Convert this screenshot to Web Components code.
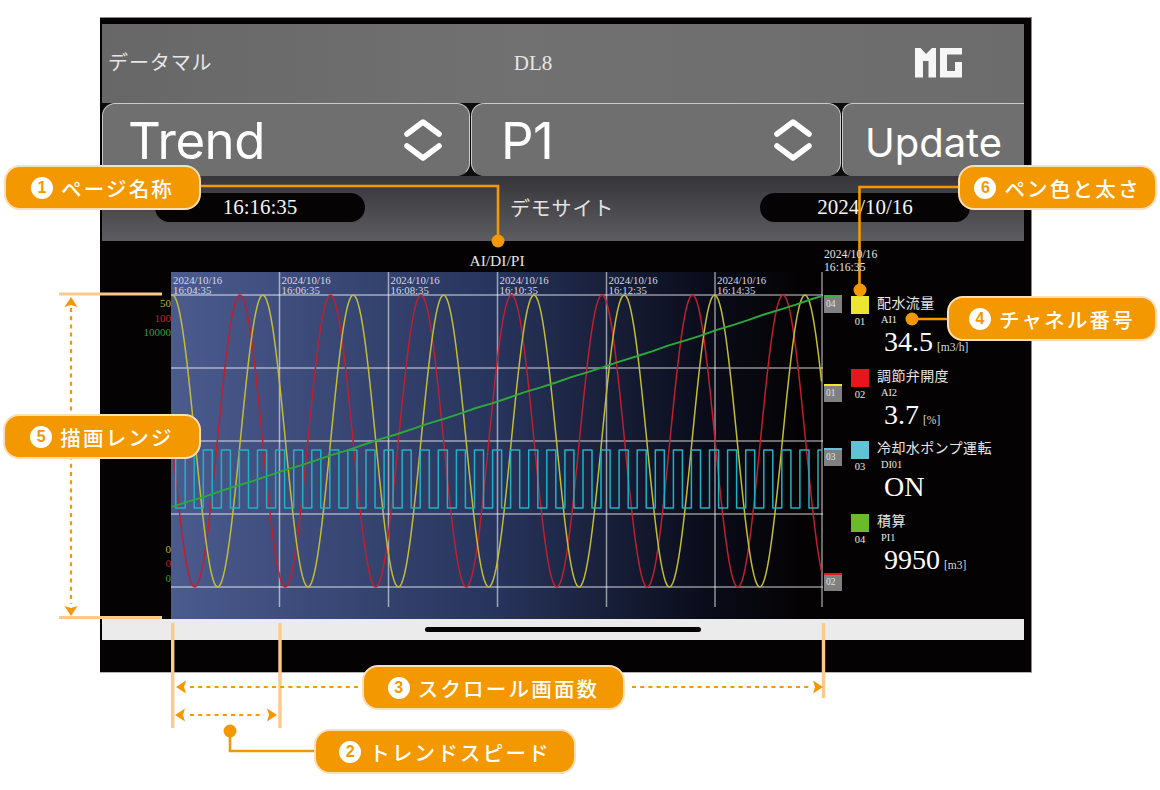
<!DOCTYPE html>
<html lang="ja">
<head>
<meta charset="utf-8">
<title>DL8 Trend</title>
<style>
  body{ margin:0; background:#fff; }
</style>
</head>
<body>
<dl-stage>
  <dl-device>
    <dl-header site="データマル" model="DL8"></dl-header>
    <dl-buttons>
      <dl-select w="368" pad="25" pr="25">Trend</dl-select>
      <dl-select w="370" pad="29" pr="26">P1</dl-select>
      <dl-update>Update</dl-update>
    </dl-buttons>
    <dl-infobar time="16:16:35" date="2024/10/16" name="デモサイト"></dl-infobar>
    <dl-trend>
      <dl-legend-item color="#ece532" no="01" tag="AI1" value="34.5" unit="[m3/h]">配水流量</dl-legend-item>
      <dl-legend-item color="#e8161c" no="02" tag="AI2" value="3.7" unit="[%]">調節弁開度</dl-legend-item>
      <dl-legend-item color="#63c3d6" no="03" tag="DI01" value="ON">冷却水ポンプ運転</dl-legend-item>
      <dl-legend-item color="#6abb2b" no="04" tag="PI1" value="9950" unit="[m3]">積算</dl-legend-item>
    </dl-trend>
    <dl-homebar></dl-homebar>
  </dl-device>
  <dl-guides></dl-guides>
  <dl-callout n="1" x="4" y="165" w="197">ページ名称</dl-callout>
  <dl-callout n="6" x="958" y="165" w="199">ペン色と太さ</dl-callout>
  <dl-callout n="4" x="947" y="296" w="210">チャネル番号</dl-callout>
  <dl-callout n="5" x="3" y="414" w="198">描画レンジ</dl-callout>
  <dl-callout n="3" x="362" y="665" w="263">スクロール画面数</dl-callout>
  <dl-callout n="2" x="314" y="729" w="262">トレンドスピード</dl-callout>
</dl-stage>

<script>
const SERIF = `"Liberation Serif","Noto Sans CJK JP",serif`;
const SANS = `"Noto Sans CJK JP","Noto Sans",sans-serif`;

class DlStage extends HTMLElement{
  connectedCallback(){
    this.attachShadow({mode:'open'}).innerHTML = `
    <style>
      :host{ display:block; position:relative; width:1160px; height:790px; overflow:hidden; background:#fff; }
      .pad{ padding-top:17px; padding-left:100px; }
    </style>
    <div class="pad"><slot></slot></div>`;
  }
}
customElements.define('dl-stage', DlStage);

class DlDevice extends HTMLElement{
  connectedCallback(){
    this.attachShadow({mode:'open'}).innerHTML = `
    <style>
      :host{
        display:flex; flex-direction:column; box-sizing:border-box;
        width:932px; height:656px; padding:6px 7px 0 2px;
        background:#040203; border-top:1px solid #8a8a8a; border-bottom:1px solid #b5b5b5; border-right:1px solid #8a8a8a;
        font-family:${SERIF}; color:#fff;
      }
    </style>
    <slot></slot>`;
  }
}
customElements.define('dl-device', DlDevice);

class DlHeader extends HTMLElement{
  connectedCallback(){
    this.attachShadow({mode:'open'}).innerHTML = `
    <style>
      :host{ display:grid; grid-template-columns:1fr auto 1fr; align-items:center; height:79px; padding:0 62px 4px 6px; box-sizing:border-box;
             background:linear-gradient(90deg,#676767,#717171 45%,#6c6c6c 100%); color:#e6e6e6; }
      .site{ font:20px ${SANS}; letter-spacing:.9px; margin-top:-1px; }
      .model{ font:21px ${SERIF}; position:relative; left:-2px; margin-top:3px; }
      svg{ justify-self:end; display:block; margin-top:3px; }
    </style>
    <div class="site">${this.getAttribute('site')}</div>
    <div class="model">${this.getAttribute('model')}</div>
    <svg width="47" height="30" viewBox="915 47 47 30" fill="#f6f6f6">
      <path d="M915 47H920.5L926 53L932 47H936V76.5H928.5V60H923V76.5H915Z"/>
      <path d="M940 47H962V53.5H947V70H955V61H962V76.5H940Z"/>
    </svg>`;
  }
}
customElements.define('dl-header', DlHeader);

class DlButtons extends HTMLElement{
  connectedCallback(){
    this.attachShadow({mode:'open'}).innerHTML = `
    <style>
      :host{ display:flex; height:73px; gap:1px; background:#0b0b0b; }
    </style>
    <slot></slot>`;
  }
}
customElements.define('dl-buttons', DlButtons);

class DlSelect extends HTMLElement{
  connectedCallback(){
    this.attachShadow({mode:'open'}).innerHTML = `
    <style>
      :host{ display:flex; align-items:center; justify-content:space-between; box-sizing:border-box;
             width:${this.getAttribute('w')}px; height:73px; padding:0 ${this.getAttribute('pr')}px 0 ${this.getAttribute('pad')}px;
             background:#6f6f6f; border:1px solid #c9c9c9; border-bottom-color:#6f6f6f; border-radius:13px;
             font:400 51px Inter,sans-serif; letter-spacing:-.5px; color:#fff; }
      svg{ display:block; }
      .t{ margin-top:2px; }
    </style>
    <span class="t"><slot></slot></span>
    <svg width="42" height="46" viewBox="0 0 42 46" fill="none" stroke="#fff" stroke-width="5.6" stroke-linecap="round" stroke-linejoin="round">
      <path d="M5 17L21 5L37 17"/>
      <path d="M5 29L21 41L37 29"/>
    </svg>`;
  }
}
customElements.define('dl-select', DlSelect);

class DlUpdate extends HTMLElement{
  connectedCallback(){
    this.attachShadow({mode:'open'}).innerHTML = `
    <style>
      :host{ display:flex; align-items:center; justify-content:center; box-sizing:border-box; flex:1; height:73px;
             background:#6f6f6f; border-top:1px solid #c9c9c9; border-left:1px solid #c9c9c9; border-top-left-radius:10px; border-bottom-left-radius:10px;
             font:400 40px Inter,sans-serif; color:#fff; padding-top:4px; }
    </style>
    <slot></slot>`;
  }
}
customElements.define('dl-update', DlUpdate);

class DlInfobar extends HTMLElement{
  connectedCallback(){
    this.attachShadow({mode:'open'}).innerHTML = `
    <style>
      :host{ display:flex; align-items:center; justify-content:space-between; box-sizing:border-box; height:65px;
             padding:0 54px 2px 53px; background:linear-gradient(#36363a,#5d5d61); }
      .pill{ width:210px; height:29px; border-radius:15px; background:#050304; display:flex; align-items:center; justify-content:center;
             font:21px ${SERIF}; color:#f5f5f5; }
      .name{ font:20px ${SANS}; letter-spacing:.8px; color:#e2e2e2; margin-left:-1px; }
    </style>
    <div class="pill">${this.getAttribute('time')}</div>
    <div class="name">${this.getAttribute('name')}</div>
    <div class="pill">${this.getAttribute('date')}</div>`;
  }
}
customElements.define('dl-infobar', DlInfobar);

class DlTrend extends HTMLElement{
  connectedCallback(){
    this.attachShadow({mode:'open'}).innerHTML = `
    <style>
      :host{ display:grid; grid-template-columns:69px 652px 1fr; grid-template-rows:31px 347px; height:378px; background:#040203; }
      .axis{ display:flex; flex-direction:column; justify-content:space-between; box-sizing:border-box;
             padding:24px 0 34px; text-align:right; font:11px/14.5px ${SERIF}; }
      .y{ color:#b9b83c } .r{ color:#c3222a } .g{ color:#2f9e3f }
      .title{ text-align:center; font:15.5px ${SERIF}; color:#e4e4e4; padding-top:11px; }
      .now{ font:11.7px/13px ${SERIF}; color:#e4e4e4; padding:7px 0 0 1px; height:24px; position:relative; z-index:1; }
      .side{ padding:24px 0 0 28px; }
    </style>
    <div></div>
    <div class="title">AI/DI/PI</div>
    <div class="now">2024/10/16<br>16:16:35</div>
    <div class="axis">
      <div><div class="y">50</div><div class="r">100</div><div class="g">10000</div></div>
      <div><div class="y">0</div><div class="r">0</div><div class="g">0</div></div>
    </div>
    <dl-chart></dl-chart>
    <div class="side"><slot></slot></div>`;
  }
}
customElements.define('dl-trend', DlTrend);

class DlChart extends HTMLElement{
  connectedCallback(){
    // chart coords: x0 = 171, y0 = 272 on the page
    const X0 = 171, Y0 = 272, W = 652, H = 347;
    const sine = (peak, period) => {
      let pts = [];
      for(let x = 172; x <= 822; x += 1.5){
        let y = 441 - 146 * Math.cos((x - peak) / period * 2 * Math.PI);
        pts.push((x - X0).toFixed(1) + ',' + (y - Y0).toFixed(1));
      }
      return pts.join(' ');
    };
    const square = () => {
      const top = 450 - Y0, bot = 508 - Y0;
      let pts = [`${175.7 - X0},${top}`, `${175.7 - X0},${bot}`];
      for(let k = 0; k < 36; k++){
        const up = 185.2 + 18.08 * k, down = up + 9.04;
        if(up > 822) break;
        pts.push(`${(up - X0).toFixed(1)},${bot}`, `${(up - X0).toFixed(1)},${top}`);
        if(down > 822){ pts.push(`${822 - X0},${top}`); break; }
        pts.push(`${(down - X0).toFixed(1)},${top}`, `${(down - X0).toFixed(1)},${bot}`);
      }
      return pts.join(' ');
    };
    const ramp = () => {
      let pts = [];
      for(let x = 172; x <= 822; x += 16){
        let y = 507 - (x - 172) / 650 * 211 + Math.sin(x * 1.7) * .3;
        pts.push((x - X0) + ',' + (y - Y0).toFixed(1));
      }
      pts.push((822 - X0) + ',' + (296 - Y0));
      return pts.join(' ');
    };
    const hlines = [295, 368, 441, 514, 587].map(y =>
      `<line x1="0" x2="${W}" y1="${y - Y0}" y2="${y - Y0}"/>`).join('');
    const stamps = ['16:04:35','16:06:35','16:08:35','16:10:35','16:12:35','16:14:35'];
    const vx = [279.5, 388.5, 497.5, 606.5, 715];
    const vlines = [...vx, 822].map(x =>
      `<line x1="${x - X0}" x2="${x - X0}" y1="0" y2="${607 - Y0}"/>`).join('');
    const labels = stamps.map((t, i) => {
      const x = (i ? vx[i - 1] : 171) + 2 - X0;
      return `<text x="${x}" y="12">2024/10/16</text><text x="${x}" y="21.500">${t}</text>`;
    }).join('');
    const tag = (y, c, t) => `
      <rect x="653" y="${y - Y0}" width="18" height="18" fill="#808080"/>
      <rect x="653" y="${y - Y0}" width="18" height="2" fill="${c}"/>
      <text x="655" y="${y - Y0 + 12}" class="tag">${t}</text>`;
    this.attachShadow({mode:'open'}).innerHTML = `
    <style>
      :host{ display:block; width:${W}px; height:${H}px; }
      svg{ display:block; overflow:visible; }
      .grid line{ stroke:#fff; stroke-opacity:.55; stroke-width:1.5; }
      .stamps text{ font:10.8px ${SERIF}; fill:#d6d9e4; }
      .tag{ font:9.5px ${SERIF}; fill:#e2e2e2; }
      polyline{ fill:none; stroke-linejoin:round; }
    </style>
    <svg width="${W}" height="${H}" viewBox="0 0 ${W} ${H}">
      <defs><linearGradient id="bg"><stop offset="0" stop-color="#4b5b8e"/><stop offset=".5" stop-color="#27345c"/><stop offset=".82" stop-color="#0a0c1a"/><stop offset=".97" stop-color="#040203"/></linearGradient></defs>
      <rect width="${W}" height="${H}" fill="url(#bg)"/>
      <g class="grid">${hlines}${vlines}</g>
      <g class="stamps">${labels}</g>
      <polyline points="${sine(240, 90.5)}" stroke="#bf1f2e" stroke-width="1.5"/>
      <polyline points="${sine(172.5, 90.35)}" stroke="#c2bc36" stroke-width="1.5"/>
      <polyline points="${square()}" stroke="#1fb2c6" stroke-width="1.5"/>
      <polyline points="${ramp()}" stroke="#2ea83c" stroke-width="1.9"/>
      ${tag(295, '#3fb03c', '04')}${tag(384, '#ece532', '01')}${tag(448, '#63c3d6', '03')}${tag(573, '#e8161c', '02')}
    </svg>`;
  }
}
customElements.define('dl-chart', DlChart);

class DlLegendItem extends HTMLElement{
  connectedCallback(){
    const unit = this.getAttribute('unit');
    this.attachShadow({mode:'open'}).innerHTML = `
    <style>
      :host{ display:flex; gap:8px; height:72.7px; font-family:${SERIF}; color:#f2f2f2; }
      .left{ width:18px; text-align:center; font:10.5px/14px ${SERIF}; color:#e8e8e8; }
      .sw{ width:18px; height:18px; margin-bottom:1px; background:${this.getAttribute('color')}; }
      .name{ font:14px/16px ${SANS}; letter-spacing:.4px; color:#e6e6e6; margin-top:-2px; }
      .tag{ font:10.3px/13px ${SERIF}; padding:2px 0 0 4px; color:#e6e6e6; margin-top:1px; }
      .val{ display:flex; align-items:baseline; gap:4px; padding-left:7px; margin-top:1px; font:28px/29px ${SERIF}; color:#fff; }
      .unit{ font:11.5px ${SERIF}; color:#d8d8d8; }
    </style>
    <div class="left"><div class="sw"></div>${this.getAttribute('no')}</div>
    <div>
      <div class="name"><slot></slot></div>
      <div class="tag">${this.getAttribute('tag')}</div>
      <div class="val">${this.getAttribute('value')}${unit ? `<span class="unit">${unit}</span>` : ''}</div>
    </div>`;
  }
}
customElements.define('dl-legend-item', DlLegendItem);

class DlHomebar extends HTMLElement{
  connectedCallback(){
    this.attachShadow({mode:'open'}).innerHTML = `
    <style>
      :host{ display:flex; align-items:center; justify-content:center; height:21px; background:#ebebeb; }
      div{ width:276px; height:5.5px; border-radius:3px; background:#050304; }
    </style>
    <div></div>`;
  }
}
customElements.define('dl-homebar', DlHomebar);

// leader lines, range marks and dotted arrows drawn over the screenshot
class DlGuides extends HTMLElement{
  connectedCallback(){
    const OR = '#f39800', PE = '#fdca8b';
    const head = (x, y, a) => `<path transform="translate(${x} ${y}) rotate(${a})" d="M0 0L6.5 10L0 8L-6.5 10Z" fill="${OR}"/>`;
    this.attachShadow({mode:'open'}).innerHTML = `
    <style>
      :host{ position:absolute; left:0; top:0; width:1160px; height:790px; pointer-events:none; }
      svg{ display:block; }
    </style>
    <svg width="1160" height="790" viewBox="0 0 1160 790">
      <g stroke="${PE}" stroke-width="3" fill="none">
        <path d="M59 294H162M59 617.5H162"/>
        <path stroke-width="3.4" d="M172.7 623V728M280 623V728M823.5 623V698"/>
      </g>
      <g stroke="${OR}" stroke-width="2.2" stroke-dasharray="4 4.2" fill="none">
        <path d="M71 308V604"/>
        <path d="M190 687H360M632 687H812"/>
        <path d="M190 715H264"/>
      </g>
      ${head(71, 297, 0)}${head(71, 616, 180)}
      ${head(176, 687, -90)}${head(823, 687, 90)}
      ${head(175, 715, -90)}${head(277, 715, 90)}
      <g stroke="${OR}" stroke-width="2.6" fill="none">
        <path d="M200 186H498V241"/>
        <path d="M960 187H859.500V290"/>
        <path d="M948 319H912"/>
        <path d="M316 751H230V731"/>
      </g>
      <g fill="${OR}">
        <circle cx="498" cy="241" r="6.5"/>
        <circle cx="860" cy="290" r="6.5"/>
        <circle cx="912" cy="319" r="6.5"/>
        <circle cx="230" cy="731" r="6.5"/>
      </g>
    </svg>`;
  }
}
customElements.define('dl-guides', DlGuides);

class DlCallout extends HTMLElement{
  connectedCallback(){
    const a = n => this.getAttribute(n);
    this.attachShadow({mode:'open'}).innerHTML = `
    <style>
      :host{ position:absolute; left:${a('x')}px; top:${a('y')}px; width:${a('w')}px; height:45px; box-sizing:border-box;
             display:flex; align-items:center; justify-content:center; gap:8px;
             background:#f39800; border:2px solid #fbdfb6; border-radius:16px;
             font:500 20.5px ${SANS}; letter-spacing:2.2px; color:#fff; white-space:nowrap; }
      .n{ flex:none; width:22px; height:22px; border-radius:50%; background:#fff; color:#f39800;
          display:flex; align-items:center; justify-content:center;
          font:700 16px "Liberation Sans",sans-serif; letter-spacing:0; }
    </style>
    <span class="n">${a('n')}</span><span><slot></slot></span>`;
  }
}
customElements.define('dl-callout', DlCallout);
</script>
</body>
</html>
